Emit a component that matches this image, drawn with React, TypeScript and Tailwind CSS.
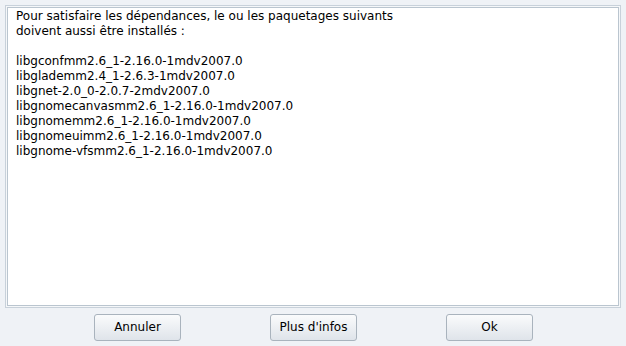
const packages = [
  'libgconfmm2.6_1-2.16.0-1mdv2007.0',
  'libglademm2.4_1-2.6.3-1mdv2007.0',
  'libgnet-2.0_0-2.0.7-2mdv2007.0',
  'libgnomecanvasmm2.6_1-2.16.0-1mdv2007.0',
  'libgnomemm2.6_1-2.16.0-1mdv2007.0',
  'libgnomeuimm2.6_1-2.16.0-1mdv2007.0',
  'libgnome-vfsmm2.6_1-2.16.0-1mdv2007.0',
];

function DialogButton({ label }: { label: string }) {
  return (
    <button
      type="button"
      className="h-[27px] w-[87px] rounded-[3px] border border-[#a9b3bd] bg-gradient-to-b from-[#fafbfc] to-[#dfe4ea] text-[12px] text-black"
    >
      {label}
    </button>
  );
}

export default function App() {
  return (
    <div className="h-[346px] w-[626px] bg-[#eff2f6] font-['DejaVu_Sans',sans-serif] text-[12px] leading-[15px] text-black">
      <div className="flex flex-col pl-[5px] pr-[5px] pt-[5px]">
        <div className="h-[303px] border border-[#c8d1da] bg-[#f5f7f9] p-px">
          <div className="h-full border border-[#bac5cf] bg-white pl-[8px] pt-[1px]">
            <p>Pour satisfaire les dépendances, le ou les paquetages suivants</p>
            <p>doivent aussi être installés :</p>
            <p>&nbsp;</p>
            {packages.map((p) => (
              <p key={p}>{p}</p>
            ))}
          </div>
        </div>
      </div>
      <div className="mt-[6px] flex justify-between pl-[94px] pr-[93px]">
        <DialogButton label="Annuler" />
        <DialogButton label="Plus d'infos" />
        <DialogButton label="Ok" />
      </div>
    </div>
  );
}
